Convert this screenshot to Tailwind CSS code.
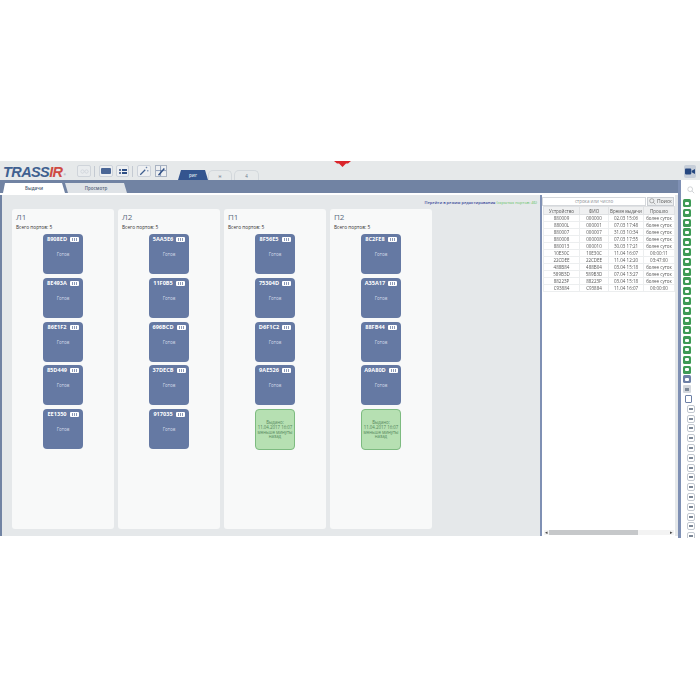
<!DOCTYPE html>
<html lang="ru">
<head>
  <meta charset="UTF-8" />
  <title>TRASSIR</title>
  <script src="https://cdn.jsdelivr.net/npm/@tailwindcss/browser@4"></script>
</head>
<body class="bg-white font-['Open_Sans',sans-serif] text-[#444]">
<div class="h-[700px] w-[700px] overflow-hidden pt-[161px] blur-[0.35px]">
  <div class="flex h-[377px] flex-col">

    <!-- TOOLBAR -->
    <div class="relative flex h-[19px] shrink-0 items-start bg-[#e6e9ea]">
      <div class="ml-[3px] mt-[4px] flex h-[15px] w-[74px] items-start font-['Liberation_Sans',sans-serif] text-[14.5px] leading-[14px] font-bold tracking-[-0.6px] italic">
        <span class="text-[#3f6090]">TRASS</span><span class="text-[#cf4a44]">IR</span><span class="ml-px mt-[8px] text-[3px] leading-[4px] text-[#8a97ab]">®</span>
      </div>
      <div class="mt-[4px] flex items-center">
        <div class="flex h-[12px] w-[14px] items-center justify-center rounded-[2px] border border-[#cfd4da] bg-[#e9ecee]">
          <svg viewBox="0 0 10 6" class="h-[5px] w-[9px]" fill="none" stroke="#ccd1d8" stroke-width=".9"><circle cx="2.6" cy="3" r="2"/><circle cx="7.4" cy="3" r="2"/></svg>
        </div>
        <div class="mx-[3px] h-[11px] w-px bg-[#c4cad2]"></div>
        <div class="ml-[1px] flex h-[12px] w-[14px] items-center justify-center rounded-[2px] border border-[#ccd2da] bg-[#eef0f2]"><div class="h-[6px] w-[10px] rounded-[1px] bg-[#4a6696]"></div></div>
        <div class="ml-[3px] flex h-[12px] w-[13px] items-center justify-center gap-px rounded-[2px] border border-[#ccd2da] bg-[#eef0f2]">
          <div class="flex flex-col gap-px"><div class="h-[2px] w-[2px] bg-[#5a7099]"></div><div class="h-[2px] w-[2px] bg-[#5a7099]"></div></div>
          <div class="flex flex-col gap-px"><div class="h-[2px] w-[5px] bg-[#2f4f85]"></div><div class="h-[2px] w-[5px] bg-[#2f4f85]"></div></div>
        </div>
        <div class="mx-[3px] h-[11px] w-px bg-[#c4cad2]"></div>
        <div class="ml-[1px] flex h-[12px] w-[14px] items-center justify-center rounded-[2px] border border-[#ccd2da] bg-[#eef0f2]">
          <svg viewBox="0 0 12 12" class="h-[10px] w-[10px]" fill="none" stroke="#3f5f8f"><path d="M1.5 10.5 7.5 4.5" stroke-width="1.5"/><path d="M9 .8v2M8 1.8h2M10.5 5v1.5M9.8 5.7h1.5" stroke-width=".6"/></svg>
        </div>
        <div class="ml-[4px] flex h-[12px] w-[12px] items-center justify-center border border-[#a9b3c2] bg-[#eef0f2]">
          <svg viewBox="0 0 12 12" class="h-[10px] w-[10px]" fill="none" stroke="#2f4f85"><path d="M0 5.5h12M5.5 0v12" stroke-width=".6"/><path d="M3 11 10 3" stroke-width="1.7"/></svg>
        </div>
      </div>
      <div class="mt-[9px] ml-[11px] flex items-end text-[4.5px] leading-[10px]">
        <div class="h-[10px] w-[30px] bg-[#34558f] text-center font-semibold text-[#dfe4ee] [clip-path:polygon(3px_0,27px_0,30px_100%,0_100%)]">риг</div>
        <div class="h-[10px] w-[24px] rounded-t-[5px] border border-b-0 border-[#d3d8dc] text-center text-[#6a788c]">н</div>
        <div class="ml-[2px] h-[10px] w-[25px] rounded-t-[5px] border border-b-0 border-[#d3d8dc] text-center text-[#6a788c]">4</div>
      </div>
      <!-- red marker, hangs from the top edge -->
      <svg viewBox="0 0 17 6" class="absolute top-0 left-[334px] h-[6px] w-[17px]"><path d="M0 0h17l-3 2.6h-2L8.5 6 5 2.6H3z" fill="#d9252b"/></svg>
      <div class="absolute top-[4px] right-[4px] flex h-[13px] w-[12px] items-center justify-center rounded-[2px] bg-[#c6ced9]">
        <svg viewBox="0 0 12 8" class="h-[7px] w-[10px]" fill="#25477f"><rect x="0" y="0.5" width="7.5" height="7" rx="1"/><path d="M8 3.2 12 1v6L8 4.8z"/></svg>
      </div>
    </div>

    <!-- MAIN ROW -->
    <div class="flex min-h-0 flex-1">
      <div class="mb-[2px] flex w-[678px] flex-col">
        <!-- tabs bar -->
        <div class="flex h-[13px] shrink-0 items-end bg-[#7183a3] pl-[3px] text-[4.5px] leading-[10px] font-semibold">
          <div class="h-[10px] w-[62px] bg-white text-center text-[#4a5a70] [clip-path:polygon(2px_0,59px_0,62px_100%,0_100%)]">Выдачи</div>
          <div class="h-[10px] w-[62px] bg-[#dfe3e7] text-center text-[#56657c] [clip-path:polygon(0_0,59px_0,62px_100%,3px_100%)]">Просмотр</div>
        </div>
        <div class="h-[2px] shrink-0 bg-white"></div>
        <div class="flex min-h-0 flex-1 bg-[#e5e8ea]">
          <!-- left border + columns -->
          <div class="w-[2px] bg-[#7183a3]"></div>
          <div class="flex w-[538px] flex-col">
            <div class="mt-[5px] h-[9px] pr-[3px] text-right text-[4px] leading-[6px]">
              <span class="font-semibold text-[#3a4a9a]">Перейти в режим редактирования</span>
              <span class="text-[#5cc25c]">(скрытых портов: 46)</span>
            </div>
            <div id="columns" class="ml-[10px] flex gap-[4px]"></div>
          </div>
          <!-- journal panel -->
          <div class="flex w-[135px] flex-col border-l-2 border-[#7f90b4] bg-white">
            <div class="flex h-[11px] shrink-0 items-center gap-px pt-[2px]">
              <div class="h-[9px] w-[104px] border border-[#d5d8dc] text-center text-[4.5px] leading-[7px] text-[#8b8f94]">строка или число</div>
              <div class="flex h-[9px] w-[27px] items-center justify-center gap-px border border-[#c9cdd2] bg-[#eceeef] text-[5px] leading-[7px] text-[#555]">
                <svg viewBox="0 0 10 10" class="h-[7px] w-[7px]" fill="none" stroke="#777" stroke-width=".8"><circle cx="4" cy="4" r="3"/><path d="M6.2 6.2 9 9"/></svg>Поиск
              </div>
            </div>
            <table class="ml-px w-[132px] table-fixed border-collapse text-center text-[4.5px] leading-[6px] text-[#555]">
              <thead>
                <tr class="h-[8px] bg-[#eff0f1]">
                  <th class="w-[36px] border border-[#dfe1e3] font-normal">Устройство</th>
                  <th class="w-[29px] border border-[#dfe1e3] font-normal">ФИО</th>
                  <th class="w-[35px] border border-[#dfe1e3] font-normal">Время выдачи</th>
                  <th class="border border-[#dfe1e3] font-normal">Прошло</th>
                </tr>
              </thead>
              <tbody id="journal"></tbody>
            </table>
            <div class="flex-1"></div>
            <!-- horizontal scrollbar -->
            <div class="mb-px ml-[2px] flex h-[5px] w-[130px] items-center bg-[#f3f3f3] text-[5px] leading-[5px] text-[#444]">
              <span class="w-[5px] text-center">◂</span>
              <div class="h-[5px] w-[89px] bg-[#c6c8ca]"></div>
              <div class="flex-1"></div>
              <span class="w-[5px] text-center">▸</span>
            </div>
          </div>
          <div class="w-[3px] bg-[#e5e8ea]"></div>
        </div>
      </div>

      <!-- device rail -->
      <div class="flex w-[22px] flex-col items-start overflow-hidden border-l-[3px] border-[#7f90b4] bg-white">
        <div class="flex h-[19px] w-full shrink-0 items-center justify-center pl-[1px]">
          <svg viewBox="0 0 10 10" class="h-[8px] w-[8px]" fill="none" stroke="#b9bdc2" stroke-width=".8"><circle cx="4" cy="4" r="3"/><path d="M6.2 6.2 9 9"/></svg>
        </div>
        <div id="rail" class="flex shrink-0 flex-col gap-[1.8px] pl-[2px]"></div>
      </div>
    </div>
  </div>
</div>

<script>
  const columns = [
    { name: "Л1", tiles: ["8908ED", "8E493A", "86E1F2", "85D449", "EE1350"] },
    { name: "Л2", tiles: ["5AA5E6", "11F0B5", "696BCD", "37DECB", "917035"] },
    { name: "П1", tiles: ["8F56E5", "75304D", "D6F1C2", "9AE526", null] },
    { name: "П2", tiles: ["8C2FE8", "A35A17", "88FB44", "A9A80D", null] }
  ];

  const journal = [
    ["880009", "000000", "02.03 15:06", "более суток"],
    ["88000L", "000001", "07.03 17:48", "более суток"],
    ["880007", "000007", "31.03 10:34", "более суток"],
    ["880008", "000008", "07.03 17:55", "более суток"],
    ["880013", "000010", "30.03 17:21", "более суток"],
    ["10E30C", "10E30C", "11.04 16:07", "00:00:11"],
    ["22CDEE", "22CDEE", "11.04 12:20", "03:47:00"],
    ["488B84", "488B04", "03.04 15:18", "более суток"],
    ["589B3D", "589B3D", "07.04 13:27", "более суток"],
    ["88223P", "88223P", "03.04 15:18", "более суток"],
    ["C93884", "C93884", "11.04 16:07", "00:00:00"]
  ];

  function tile(id) {
    if (!id) {
      return `<div class="flex h-[41px] w-[40px] flex-col items-center justify-center rounded-[4px] border border-[#7dbb80] bg-[#b6e0b2] text-center text-[4.4px] leading-[4.8px] text-[#55875c]">
        Выдано:<br>11.04.2017 16:07<br>меньше минуты<br>назад</div>`;
    }
    return `<div class="flex h-[40px] w-[40px] flex-col items-center rounded-[4px] bg-[#6579a3] text-white">
      <div class="mt-[2px] flex h-[7px] items-center gap-[3px] text-[5.6px] leading-[7px] font-bold">${id}
        <span class="flex h-[5px] w-[9px] items-center justify-center gap-px rounded-[1px] bg-white"><i class="h-[3px] w-px bg-[#8c9ab8]"></i><i class="h-[3px] w-px bg-[#8c9ab8]"></i><i class="h-[3px] w-px bg-[#8c9ab8]"></i></span>
      </div>
      <div class="mt-[8px] text-[4.5px] leading-[6px] text-[#d8deea]">Готов</div>
    </div>`;
  }

  document.getElementById("columns").innerHTML = columns.map(c => `
    <div class="h-[320px] w-[102px] rounded-[3px] bg-[#f8f9f9] px-[4px]">
      <div class="pt-[2px] text-[8px] leading-[11px] text-[#5b6b80]">${c.name}</div>
      <div class="mt-[2px] text-[4.8px] leading-[6px] text-[#333]">Всего портов: 5</div>
      <div class="mt-[4px] ml-[27px] flex w-[40px] flex-col gap-[3.75px]">${c.tiles.map(tile).join("")}</div>
    </div>`).join("");

  document.getElementById("journal").innerHTML = journal.map(r =>
    `<tr class="h-[7px]">${r.map(v => `<td class="border border-[#eceeef] whitespace-nowrap">${v}</td>`).join("")}</tr>`
  ).join("");

  // 18 green, one blue, one grey, one folder, then the outlined ones
  let rail = "";
  for (let i = 0; i < 18; i++) {
    rail += `<div class="flex h-[8px] w-[8px] items-center justify-center rounded-[1.5px] bg-[#3e9a55]"><div class="h-[3px] w-[4px] rounded-[1px] bg-white"></div></div>`;
  }
  rail += `<div class="flex h-[8px] w-[8px] items-center justify-center rounded-[1.5px] bg-[#6d80a6]"><div class="h-[3px] w-[4px] rounded-[1px] bg-white"></div></div>`;
  rail += `<div class="flex h-[8px] w-[8px] items-center justify-center rounded-[1px] bg-[#d3d7dd]"><div class="h-[3px] w-[4px] bg-[#7c8796]"></div></div>`;
  rail += `<div class="ml-[2px] h-[8px] w-[7px] rounded-[1px] border border-[#6d80a6]"></div>`;
  for (let i = 0; i < 14; i++) {
    rail += `<div class="ml-[4px] flex h-[8px] w-[8px] items-center justify-center rounded-[2px] border border-[#c3c9d1]"><div class="h-[2px] w-[4px] bg-[#7c8796]"></div></div>`;
  }
  document.getElementById("rail").innerHTML = rail;
</script>
</body>
</html>
